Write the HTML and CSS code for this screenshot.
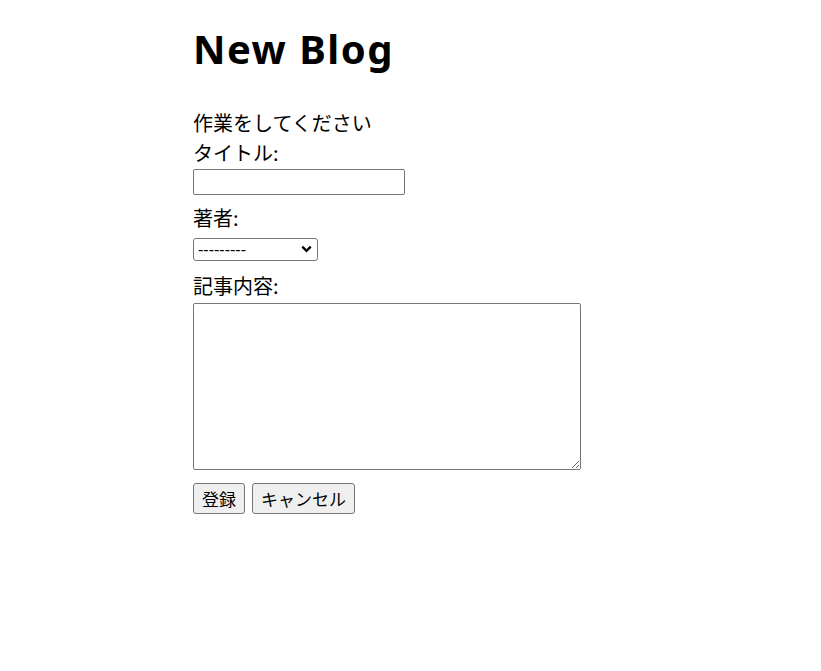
FILE: index.html
```html
<!DOCTYPE html>
<html lang="ja">
<head>
<meta charset="utf-8">
<title>New Blog</title>
<link rel="stylesheet" href="styles.css">
</head>
<body>
<main class="page">
  <h1 class="title">New Blog</h1>
  <form class="form">
    <p class="lead">作業をしてください</p>
    <label class="label" for="title">タイトル:</label>
    <input class="text-input" id="title" type="text">
    <label class="label label-author" for="author">著者:</label>
    <div class="select-wrap">
      <select class="select" id="author">
        <option>---------</option>
      </select>
      <svg class="chevron" width="11" height="8" viewBox="0 0 11 8" aria-hidden="true">
        <path d="M1.3 1.6 L5.5 5.8 L9.7 1.6" fill="none" stroke="#000" stroke-width="2.3"/>
      </svg>
    </div>
    <label class="label label-body" for="body">記事内容:</label>
    <textarea class="textarea" id="body"></textarea>
    <div class="actions">
      <button type="submit" class="btn">登録</button>
      <button type="button" class="btn">キャンセル</button>
    </div>
  </form>
</main>
</body>
</html>
```

FILE: styles.css
```css
html, body {
  margin: 0;
  padding: 0;
  background: #fff;
}
body {
  font-family: "Noto Sans CJK JP", "Noto Sans", sans-serif;
  color: #000;
}
.page {
  padding: 0 0 0 193px;
}
.title {
  margin: 0;
  padding-top: 21px;
  font-family: "Noto Sans", "DejaVu Sans", sans-serif;
  font-size: 40px;
  font-weight: 700;
  letter-spacing: 1.5px;
  line-height: 56px;
}
.form {
  display: flex;
  flex-direction: column;
  align-items: flex-start;
  margin-top: 28px;
  font-size: 20px;
  line-height: 30px;
}
.lead {
  margin: 0;
  padding-top: 3px;
}
.label {
  display: block;
}
.text-input {
  box-sizing: border-box;
  width: 212px;
  height: 26px;
  margin: 1px 0 0;
  border: 1px solid #767676;
  border-radius: 2px;
  padding: 1px 2px;
  font-size: 13px;
}
.label-author {
  margin-top: 8px;
}
.select-wrap {
  position: relative;
  margin-top: 5px;
  width: 125px;
  height: 23px;
}
.select {
  box-sizing: border-box;
  appearance: none;
  -webkit-appearance: none;
  display: block;
  width: 125px;
  height: 23px;
  margin: 0;
  padding: 0 20px 0 4px;
  border: 1px solid #767676;
  border-radius: 3px;
  font-family: "Liberation Sans", "Noto Sans", sans-serif;
  font-size: 16px;
  line-height: 21px;
  color: #000;
  background: #fff;
}
.chevron {
  position: absolute;
  right: 6px;
  top: 7px;
  pointer-events: none;
}
.label-body {
  margin-top: 10px;
}
.textarea {
  box-sizing: border-box;
  width: 388px;
  height: 167px;
  margin: 2px 0 0;
  border: 1px solid #767676;
  border-radius: 2px;
  font-size: 13px;
}
.actions {
  display: flex;
  gap: 7px;
  margin-top: 13px;
}
.btn {
  box-sizing: border-box;
  height: 31px;
  padding: 0 8px;
  font-family: "Noto Sans CJK JP", sans-serif;
  font-size: 17px;
  line-height: 26px;
  color: #000;
  background: #efefef;
  border: 1px solid #767676;
  border-radius: 3px;
}
```
